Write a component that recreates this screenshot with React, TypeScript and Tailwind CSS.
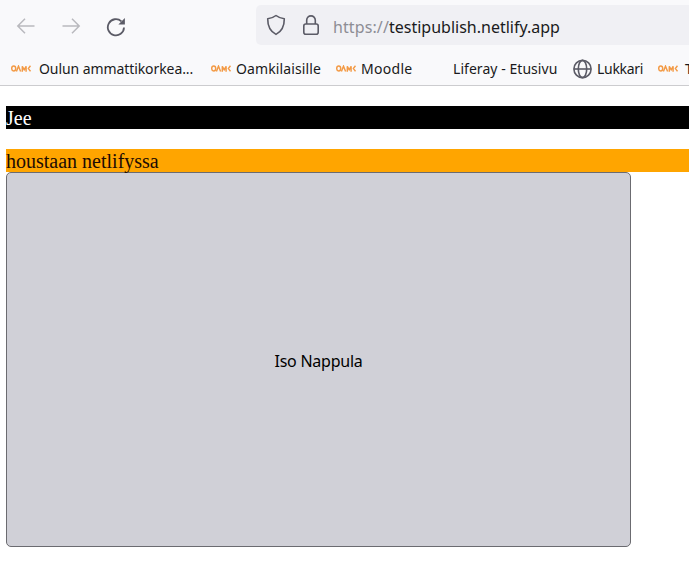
function OamkMark() {
  return (
    <svg viewBox="0 0 20 8" className="h-2 w-5 shrink-0" fill="none" stroke="#f39a45" strokeWidth="1.45">
      <ellipse cx="2.7" cy="3.5" rx="2" ry="2.5" />
      <path d="M5.4 6.6 7.5 1.2 9.6 6.6M11.3 6.8V1.3L13.2 4.8 15.1 1.3V6.8M19.5 0.8 17.4 3.6 19.5 6.4" />
    </svg>
  );
}

function Globe() {
  return (
    <svg viewBox="0 0 20 20" className="size-5 shrink-0" fill="none" stroke="#5b5b66" strokeWidth="1.6">
      <circle cx="10.5" cy="10" r="8.6" />
      <ellipse cx="10.5" cy="10" rx="4.2" ry="8.6" />
      <path d="M2 10H19" />
    </svg>
  );
}

function NavIcons() {
  return (
    <div className="flex w-[256px] shrink-0 items-center pb-[3px] pl-[16px]">
      <svg viewBox="0 0 20 20" className="size-5" fill="none" stroke="#b9b9be" strokeWidth="1.5">
        <path d="M18.5 10H2M9 2.8 1.8 10 9 17.2" />
      </svg>
      <svg viewBox="0 0 20 20" className="ml-[25px] size-5" fill="none" stroke="#b9b9be" strokeWidth="1.5">
        <path d="M1.5 10H18M11 2.8 18.2 10 11 17.2" />
      </svg>
      <svg viewBox="0 0 20 20" className="ml-[25px] mt-px size-5" fill="none">
        <path d="M18 10.5A8.1 8.1 0 1 1 15.4 4.3" stroke="#5b5b66" strokeWidth="1.8" />
        <path d="M18.9 1V7.5H12.4Z" fill="#5b5b66" />
      </svg>
    </div>
  );
}

export default function App() {
  return (
    <div className="h-[571px] w-full overflow-hidden bg-white">
      <header className="h-[86px] border-b border-[#cccccf] bg-[#f9f9fb] font-['Noto_Sans',sans-serif] text-[#1a1a20]">
        <div className="flex h-[50px] pt-[5px]">
          <NavIcons />
          <div className="flex h-10 flex-1 items-center rounded-l-[5px] bg-[#f0f0f4] pl-[10px]">
            <svg viewBox="0 0 20 22" className="h-[22px] w-5" fill="none" stroke="#5b5b66" strokeWidth="1.6" strokeLinejoin="round">
              <path d="M10 1.5C7.5 3.5 4.8 4.4 1.7 4.7C1.6 12 4.4 17.4 10 20.4C15.6 17.4 18.4 12 18.3 4.7C15.2 4.4 12.5 3.5 10 1.5Z" />
            </svg>
            <svg viewBox="0 0 18 22" className="ml-4 h-[22px] w-[18px]" fill="none" stroke="#5b5b66" strokeWidth="1.6">
              <rect x="1.8" y="10" width="14.4" height="10.2" rx="2" />
              <path d="M4.7 10V6.2A4.3 4.3 0 0 1 13.3 6.2V10" />
            </svg>
            <div className="ml-[13px] flex whitespace-pre pt-[3px] text-[16px] leading-5">
              <span className="w-[56px] tracking-[0.1px] text-[#8d8d94]">https://</span>
              <span>testipublish.netlify.app</span>
            </div>
          </div>
        </div>
        <nav className="flex h-[35px] items-center whitespace-nowrap pl-[11px] pt-[2px] text-[14px] leading-5">
          <div className="flex w-[200px] shrink-0 items-center gap-2">
            <OamkMark />
            <span className="tracking-[-0.08px]">Oulun ammattikorkea...</span>
          </div>
          <div className="flex w-[125px] shrink-0 items-center gap-[5px]">
            <OamkMark />
            <span className="tracking-[0.12px]">Oamkilaisille</span>
          </div>
          <div className="flex w-[117px] shrink-0 items-center gap-[5px]">
            <OamkMark />
            <span className="tracking-[0.3px]">Moodle</span>
          </div>
          <div className="w-[119px] shrink-0 tracking-[0.05px]">Liferay - Etusivu</div>
          <div className="flex w-[86px] shrink-0 items-center gap-[5px]">
            <Globe />
            <span className="tracking-[-0.3px]">Lukkari</span>
          </div>
          <div className="flex shrink-0 items-center gap-[7px]">
            <OamkMark />
            <span>T</span>
          </div>
        </nav>
      </header>
      <main className="pl-[6px] pt-5 font-['Liberation_Serif',serif] text-[20px] leading-[23px]">
        <p className="h-[23px] bg-black pt-px text-white">Jee</p>
        <p className="mt-5 h-[23px] bg-[#ffa500] pt-px text-[#1c0c04]">houstaan netlifyssa</p>
        <button className="block h-[375px] w-[625px] rounded-[5px] border border-[#6b6b70] bg-[#d0d0d7] pt-[3px] font-['Noto_Sans',sans-serif] text-[16px] tracking-[-0.25px] text-black">
          Iso Nappula
        </button>
      </main>
    </div>
  );
}
